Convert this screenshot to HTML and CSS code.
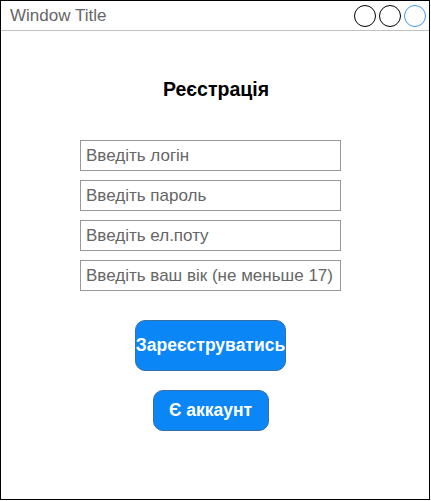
FILE: index.html
```html
<!DOCTYPE html>
<html lang="uk">
<head>
<meta charset="utf-8">
<title>Реєстрація</title>
<link rel="stylesheet" href="styles.css">
</head>
<body>
<div class="window">
  <div class="titlebar">
    <span class="title">Window Title</span>
    <div class="controls">
      <span class="dot"></span>
      <span class="dot"></span>
      <span class="dot dot-blue"></span>
    </div>
  </div>
  <div class="content">
    <h1 class="heading">Реєстрація</h1>
    <div class="form">
      <div class="field">Введіть логін</div>
      <div class="field">Введіть пароль</div>
      <div class="field">Введіть ел.поту</div>
      <div class="field">Введіть ваш вік (не меньше 17)</div>
      <div class="btn btn-register">Зареєструватись</div>
      <div class="btn btn-account">Є аккаунт</div>
    </div>
  </div>
</div>
</body>
</html>
```

FILE: styles.css
```css
* { box-sizing: border-box; }
html, body { margin: 0; padding: 0; background: #fff; }
body { font-family: "Liberation Sans", Arial, sans-serif; }

.window {
  width: 430px;
  height: 500px;
  border: 1px solid #000;
  display: flex;
  flex-direction: column;
}

.titlebar {
  height: 30px;
  border-bottom: 1px solid #c0c0c0;
  display: flex;
  align-items: center;
  justify-content: space-between;
  padding: 0 3px 0 9px;
}

.title {
  font-size: 17px;
  color: #666;
  line-height: 20px;
  margin-top: 1px;
}

.controls {
  display: flex;
  gap: 3px;
  margin-top: 1px;
}

.dot {
  width: 22px;
  height: 22px;
  border: 1px solid #000;
  border-radius: 50%;
}

.dot-blue { border-color: #3d9be9; }

.content {
  display: flex;
  flex-direction: column;
}

.heading {
  margin: 48px 0 0 0;
  font-size: 19.5px;
  line-height: 20px;
  font-weight: bold;
  text-align: center;
  padding-left: 2px;
  color: #000;
}

.form {
  margin: 41px 0 0 79px;
  width: 261px;
  display: flex;
  flex-direction: column;
  align-items: center;
}

.field {
  width: 261px;
  height: 31px;
  border: 1px solid #999;
  font-size: 17px;
  color: #666;
  line-height: 29px;
  padding-left: 5px;
  white-space: nowrap;
  margin-bottom: 9px;
}

.btn {
  background: #0a86f7;
  border: 1px solid #3b6fa3;
  border-radius: 10px;
  color: #fff;
  font-weight: bold;
  font-size: 17.5px;
  display: flex;
  align-items: center;
  justify-content: center;
  white-space: nowrap;
}

.btn-register {
  width: 151px;
  height: 51px;
  margin-top: 20px;
}

.btn-account {
  width: 116px;
  height: 41px;
  margin-top: 19px;
}
```
